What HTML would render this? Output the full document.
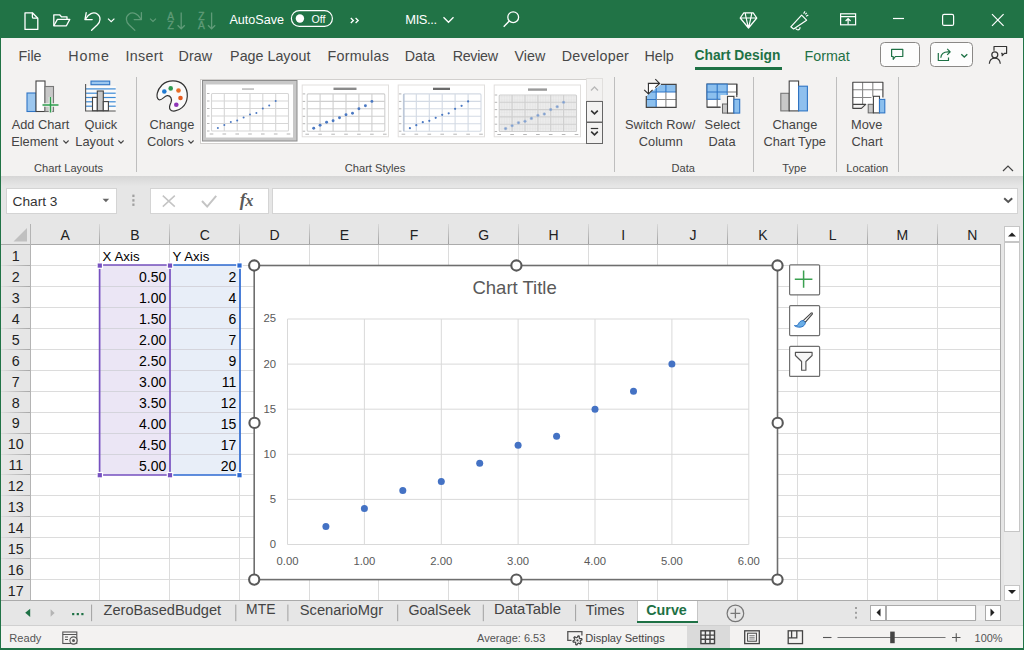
<!DOCTYPE html><html><head><meta charset="utf-8"><style>
html,body{margin:0;padding:0}
body{width:1024px;height:650px;overflow:hidden;position:relative;background:#e6e6e6;font-family:"Liberation Sans",sans-serif}
.t{position:absolute;white-space:nowrap}
.r{position:absolute;box-sizing:border-box}
svg.r{overflow:visible}
</style></head><body>
<div class="r" style="left:0px;top:0px;width:1024px;height:38px;background:#217346"></div>
<svg class="r" style="left:0px;top:0px;" width="1024" height="38" viewBox="0 0 1024 38"><path d="M25 12.8h7.4l5.4 5.4v11.2h-12.8z" fill="none" stroke="#fff" stroke-width="1.3" stroke-linejoin="round"/><path d="M32.4 12.8v4.2q0 1.2 1.2 1.2h4.2" fill="none" stroke="#fff" stroke-width="1.3"/><path d="M53.8 25.8v-11h5.8l1.8 2h5.6v2.6" fill="none" stroke="#fff" stroke-width="1.3" stroke-linejoin="round"/><path d="M53.8 25.8l3.6-6.4h12.4l-3.4 6.4z" fill="none" stroke="#fff" stroke-width="1.3" stroke-linejoin="round"/><path d="M86.2 12.6l-1.2 7h7.2" fill="none" stroke="#fff" stroke-width="1.3" stroke-linejoin="round" stroke-linecap="round"/><path d="M85.4 19.2c2.6-5.4 8.2-8 12.2-5c3.6 2.8 2.8 7.6-0.2 10.6l-5.8 5.4" fill="none" stroke="#fff" stroke-width="1.3" stroke-linecap="round"/><path d="M108 18.6l3.2 3l3.2-3" fill="none" stroke="#fff" stroke-width="1.2"/><path d="M141.4 12.6v7h-7.2" fill="none" stroke="#5f9b78" stroke-width="1.3" stroke-linejoin="round" stroke-linecap="round"/><path d="M141 19.2c-2.6-5.4-8.2-8-12.2-5c-3.6 2.8-2.8 7.6 0.2 10.6l5.8 5.4" fill="none" stroke="#5f9b78" stroke-width="1.3" stroke-linecap="round"/><path d="M150 18.6l3 2.8l3-2.8" fill="none" stroke="#5f9b78" stroke-width="1.2"/><text x="167.3" y="19.8" font-size="10.2" fill="#5f9b78" stroke="#5f9b78" stroke-width="0.35" font-family="Liberation Sans">A</text><text x="167.6" y="29.4" font-size="10.2" fill="#5f9b78" stroke="#5f9b78" stroke-width="0.35" font-family="Liberation Sans">Z</text><path d="M181.2 12.5v16.3 M177.6 25.2l3.6 3.6l3.6-3.6" fill="none" stroke="#5f9b78" stroke-width="1.3"/><text x="198.2" y="19.8" font-size="10.2" fill="#5f9b78" stroke="#5f9b78" stroke-width="0.35" font-family="Liberation Sans">Z</text><text x="197.9" y="29.4" font-size="10.2" fill="#5f9b78" stroke="#5f9b78" stroke-width="0.35" font-family="Liberation Sans">A</text><path d="M211.6 12.5v16.3 M208 25.2l3.6 3.6l3.6-3.6" fill="none" stroke="#5f9b78" stroke-width="1.3"/><rect x="291.4" y="10.6" width="41" height="15.8" rx="7.9" fill="none" stroke="#fff" stroke-width="1.2"/><circle cx="299.9" cy="18.5" r="4.2" fill="#fff"/><path d="M350.8 18l2.6 2.5l-2.6 2.5 M355.6 18l2.6 2.5l-2.6 2.5" fill="none" stroke="#fff" stroke-width="1.3"/><path d="M443.5 17.3l5 5l5-5" fill="none" stroke="#fff" stroke-width="1.3"/><circle cx="513.2" cy="17.2" r="5.4" fill="none" stroke="#fff" stroke-width="1.3"/><path d="M509.3 21.1l-5.6 5.6" stroke="#fff" stroke-width="1.4"/><path d="M743.8 12.8h9.4l3.6 5.2l-8.3 10l-8.3-10z M740.2 18h16.6 M745.2 12.8q0.4 3.4 3.3 15.2 M751.8 12.8q-0.4 3.4-3.3 15.2" fill="none" stroke="#fff" stroke-width="1.2" stroke-linejoin="round"/><path d="M790.8 26.8l10.8-11.6l5 5l-13 8.8z" fill="none" stroke="#fff" stroke-width="1.2" stroke-linejoin="round"/><path d="M795.8 28.4c0.4 1.6 2.8 1.9 3.9 0.4l0.5-1.6" fill="none" stroke="#fff" stroke-width="1.2"/><path d="M803.6 13.6l1.4-2.2 M806 16.2l2.3-1.2 M805.2 14.4l1.6-1.6" stroke="#fff" stroke-width="1.1"/><rect x="840.6" y="13.8" width="15" height="11" fill="none" stroke="#fff" stroke-width="1.2"/><path d="M840.6 16.6h15 M848.1 24.5v-6 M845.6 21l2.5-2.5l2.5 2.5" fill="none" stroke="#fff" stroke-width="1.2"/><path d="M893 18.5h11" stroke="#fff" stroke-width="1.2"/><rect x="942.6" y="14.4" width="11" height="11" rx="1.5" fill="none" stroke="#fff" stroke-width="1.2"/><path d="M992 14.2l11.6 11.6 M1003.6 14.2l-11.6 11.6" stroke="#fff" stroke-width="1.2"/></svg>
<div class="t" style="left:229.4px;top:13.73px;font-size:12.6px;line-height:12.6px;color:#fff;font-weight:normal;">AutoSave</div>
<div class="t" style="left:311.6px;top:13.73px;font-size:10.6px;line-height:10.6px;color:#fff;font-weight:normal;">Off</div>
<div class="t" style="left:405.3px;top:14.38px;font-size:12.9px;line-height:12.9px;color:#fff;font-weight:normal;letter-spacing:-0.4px;">MIS...</div>
<div class="r" style="left:0px;top:0px;width:1px;height:650px;background:#217346"></div>
<div class="r" style="left:1023px;top:38px;width:1px;height:612px;background:#217346"></div>
<div class="r" style="left:0px;top:648px;width:1024px;height:2px;background:#217346"></div>
<div class="r" style="left:1px;top:38px;width:1022px;height:138px;background:#f3f2f1"></div>
<div class="r" style="left:1px;top:176px;width:1022px;height:10px;background:linear-gradient(#d6d6d6,#e6e6e6)"></div>
<div class="t" style="left:18.5px;top:48.90px;font-size:14.3px;line-height:14.3px;color:#484848;font-weight:normal;letter-spacing:0px;">File</div>
<div class="t" style="left:68.3px;top:48.90px;font-size:14.3px;line-height:14.3px;color:#484848;font-weight:normal;letter-spacing:0.85px;">Home</div>
<div class="t" style="left:125.4px;top:48.90px;font-size:14.3px;line-height:14.3px;color:#484848;font-weight:normal;letter-spacing:0.36px;">Insert</div>
<div class="t" style="left:178.6px;top:48.90px;font-size:14.3px;line-height:14.3px;color:#484848;font-weight:normal;letter-spacing:0px;">Draw</div>
<div class="t" style="left:230.1px;top:48.90px;font-size:14.3px;line-height:14.3px;color:#484848;font-weight:normal;letter-spacing:0px;">Page Layout</div>
<div class="t" style="left:327.4px;top:48.90px;font-size:14.3px;line-height:14.3px;color:#484848;font-weight:normal;letter-spacing:0.28px;">Formulas</div>
<div class="t" style="left:404.8px;top:48.90px;font-size:14.3px;line-height:14.3px;color:#484848;font-weight:normal;letter-spacing:0px;">Data</div>
<div class="t" style="left:452.7px;top:48.90px;font-size:14.3px;line-height:14.3px;color:#484848;font-weight:normal;letter-spacing:-0.3px;">Review</div>
<div class="t" style="left:514.5px;top:48.90px;font-size:14.3px;line-height:14.3px;color:#484848;font-weight:normal;letter-spacing:0px;">View</div>
<div class="t" style="left:561.7px;top:48.90px;font-size:14.3px;line-height:14.3px;color:#484848;font-weight:normal;letter-spacing:0.25px;">Developer</div>
<div class="t" style="left:644.4px;top:48.90px;font-size:14.3px;line-height:14.3px;color:#484848;font-weight:normal;letter-spacing:0px;">Help</div>
<div class="t" style="left:694.5px;top:49.32px;font-size:13.8px;line-height:13.8px;color:#1e7145;font-weight:bold;">Chart Design</div>
<div class="t" style="left:804.5px;top:48.90px;font-size:14.3px;line-height:14.3px;color:#1e7145;font-weight:normal;">Format</div>
<div class="r" style="left:695px;top:67px;width:87px;height:3px;background:#1e7145"></div>
<div class="r" style="left:879.5px;top:42.3px;width:40px;height:25px;border:1px solid #8a8886;border-radius:4.5px;background:#fdfdfd"></div>
<div class="r" style="left:929.5px;top:42.3px;width:43px;height:25px;border:1px solid #8a8886;border-radius:4.5px;background:#fdfdfd"></div>
<svg class="r" style="left:0px;top:0px;" width="1024" height="80" viewBox="0 0 1024 80"><path d="M891.6 49.3h11.2v7.2h-7.4l-2.2 2.8v-2.8h-1.6z" fill="none" stroke="#1e7145" stroke-width="1.2" stroke-linejoin="round"/><path d="M938.3 53v7.5h10.2v-3" fill="none" stroke="#1e7145" stroke-width="1.2" stroke-linejoin="round"/><path d="M940.8 57.8c0.3-3.6 3-6 7.2-6h1.6 M947.2 48.8l3 3l-3 3" fill="none" stroke="#1e7145" stroke-width="1.2" stroke-linejoin="round"/><path d="M961.3 54.2l3 2.8l3-2.8" fill="none" stroke="#1e7145" stroke-width="1.3"/><circle cx="994.8" cy="54.8" r="3" fill="none" stroke="#333" stroke-width="1.2"/><path d="M989.3 63.8c0.4-3.6 2.6-5.6 5.5-5.6c2.9 0 5.1 2 5.5 5.6" fill="none" stroke="#333" stroke-width="1.2"/><path d="M994 50.8v-4.3h12.6v6.8h-2.2l-2.2 2.4v-2.4h-1" fill="none" stroke="#333" stroke-width="1.2" stroke-linejoin="round"/></svg>
<div class="r" style="left:136px;top:77px;width:1px;height:95px;background:#bebebe"></div>
<div class="r" style="left:614px;top:77px;width:1px;height:95px;background:#bebebe"></div>
<div class="r" style="left:753px;top:77px;width:1px;height:95px;background:#bebebe"></div>
<div class="r" style="left:836px;top:77px;width:1px;height:95px;background:#bebebe"></div>
<div class="r" style="left:898px;top:77px;width:1px;height:95px;background:#bebebe"></div>
<div class="t" style="left:11.7px;top:118.56px;font-size:12.8px;line-height:12.8px;color:#444;font-weight:normal;">Add Chart</div>
<div class="t" style="left:11.2px;top:136.16px;font-size:12.8px;line-height:12.8px;color:#444;font-weight:normal;">Element</div>
<div class="t" style="left:84.5px;top:118.56px;font-size:12.8px;line-height:12.8px;color:#444;font-weight:normal;">Quick</div>
<div class="t" style="left:75.3px;top:136.16px;font-size:12.8px;line-height:12.8px;color:#444;font-weight:normal;">Layout</div>
<div class="t" style="left:149.5px;top:118.56px;font-size:12.8px;line-height:12.8px;color:#444;font-weight:normal;">Change</div>
<div class="t" style="left:147.0px;top:136.16px;font-size:12.8px;line-height:12.8px;color:#444;font-weight:normal;">Colors</div>
<div class="t" style="left:625.0px;top:118.56px;font-size:12.8px;line-height:12.8px;color:#444;font-weight:normal;">Switch Row/</div>
<div class="t" style="left:638.8px;top:136.16px;font-size:12.8px;line-height:12.8px;color:#444;font-weight:normal;">Column</div>
<div class="t" style="left:704.6px;top:118.56px;font-size:12.8px;line-height:12.8px;color:#444;font-weight:normal;">Select</div>
<div class="t" style="left:708.5px;top:136.16px;font-size:12.8px;line-height:12.8px;color:#444;font-weight:normal;">Data</div>
<div class="t" style="left:772.5px;top:118.56px;font-size:12.8px;line-height:12.8px;color:#444;font-weight:normal;">Change</div>
<div class="t" style="left:763.5px;top:136.16px;font-size:12.8px;line-height:12.8px;color:#444;font-weight:normal;">Chart Type</div>
<div class="t" style="left:851.0px;top:118.56px;font-size:12.8px;line-height:12.8px;color:#444;font-weight:normal;">Move</div>
<div class="t" style="left:851.5px;top:136.16px;font-size:12.8px;line-height:12.8px;color:#444;font-weight:normal;">Chart</div>
<div class="t" style="left:-131.4px;width:400px;text-align:center;top:162.60px;font-size:11.1px;line-height:11.1px;color:#444;font-weight:normal;">Chart Layouts</div>
<div class="t" style="left:175.0px;width:400px;text-align:center;top:162.60px;font-size:11.1px;line-height:11.1px;color:#444;font-weight:normal;">Chart Styles</div>
<div class="t" style="left:483.2px;width:400px;text-align:center;top:162.60px;font-size:11.1px;line-height:11.1px;color:#444;font-weight:normal;">Data</div>
<div class="t" style="left:594.4px;width:400px;text-align:center;top:162.60px;font-size:11.1px;line-height:11.1px;color:#444;font-weight:normal;">Type</div>
<div class="t" style="left:667.3px;width:400px;text-align:center;top:162.60px;font-size:11.1px;line-height:11.1px;color:#444;font-weight:normal;">Location</div>
<svg class="r" style="left:0px;top:0px;" width="1024" height="180" viewBox="0 0 1024 180"><path d="M63.4 140.5l2.6 2.6l2.6-2.6" fill="none" stroke="#444" stroke-width="1.1"/><path d="M118.4 140.5l2.6 2.6l2.6-2.6" fill="none" stroke="#444" stroke-width="1.1"/><path d="M188.4 140.5l2.6 2.6l2.6-2.6" fill="none" stroke="#444" stroke-width="1.1"/><path d="M1003 171l5-5l5 5" fill="none" stroke="#444" stroke-width="1.2"/><rect x="27" y="93" width="9" height="18.5" fill="#9cc7ef" stroke="#2f75c5" stroke-width="1.1"/><rect x="36" y="81" width="9" height="30.5" fill="#fff" stroke="#444" stroke-width="1.1"/><rect x="45" y="86.5" width="8.5" height="25" fill="#c8c8c8" stroke="#777" stroke-width="1.1"/><path d="M50.5 97v15.5 M42.5 105h16" stroke="#f3f2f1" stroke-width="3.5"/><path d="M50.5 97v15.5 M42.5 105h16" stroke="#2e9e4e" stroke-width="1.5"/><rect x="86" y="86" width="30" height="25" fill="#fbfaf9"/><rect x="91" y="81.1" width="18.7" height="3.6" fill="#9cc7ef" stroke="#2f75c5" stroke-width="1.1"/><path d="M86 88.9h29.7" stroke="#3d8bd6" stroke-width="1.2"/><path d="M86 93.2h29.7" stroke="#3d8bd6" stroke-width="1.2"/><path d="M86 97.5h29.7" stroke="#3d8bd6" stroke-width="1.2"/><path d="M86 101.8h29.7" stroke="#3d8bd6" stroke-width="1.2"/><path d="M86 106.2h29.7" stroke="#3d8bd6" stroke-width="1.2"/><path d="M85.6 84v27h30.1" fill="none" stroke="#555" stroke-width="1.1"/><rect x="92.5" y="97.4" width="4.8" height="13.3" fill="#fff" stroke="#444" stroke-width="1.1"/><rect x="97.3" y="91" width="6" height="19.7" fill="#c8c8c8" stroke="#444" stroke-width="1.1"/><rect x="103.3" y="101.6" width="5.1" height="9.1" fill="#fff" stroke="#444" stroke-width="1.1"/><path d="M158.6 99.6C155.6 97 157 90 162 85C168 79.6 178 79.6 183.6 85C189 91 188.6 102 182 107.6C177.6 111.5 172 112 170.2 109.6C168.6 107.5 170 104.5 171 102.5C172.5 99 170.5 95.3 167.2 95.6C164 96 161.5 101.5 158.6 99.6Z" fill="#fafafa" stroke="#333" stroke-width="1.2"/><circle cx="164.3" cy="91.5" r="2.3" fill="#1f7ad1"/><circle cx="170.7" cy="88.4" r="2.3" fill="#2e9a50"/><circle cx="178.5" cy="90.5" r="2.3" fill="#e76f28"/><circle cx="180.5" cy="98" r="2.3" fill="#e55a1f"/><circle cx="176.3" cy="104.7" r="2.3" fill="#8e35b8"/><rect x="646.3" y="84.4" width="29.8" height="23" fill="#fff"/><path d="M646.3 95.9L660.9 84.4H676.1V92H656.2V107.4H646.3Z" fill="#8cc0ee"/><path d="M651.25 92H676.1 M656.2 88.1V107.4 M646.3 99.5H656.2 M665.9 84.4V92" stroke="#2f75c5" stroke-width="1.1"/><path d="M656.2 99.5H676.1 M665.9 92V107.4" stroke="#888" stroke-width="1.1"/><path d="M660.9 84.4H676.1V107.4H646.3V95.9" fill="none" stroke="#444" stroke-width="1.2"/><path d="M648.4 94V83.4H659.6 M655.3 79.1L659.6 83.4L655.3 87.7 M644.2 89.8L648.4 94L652.6 89.8" fill="none" stroke="#333" stroke-width="1.15"/><rect x="707" y="84.1" width="29.8" height="23.1" fill="#fff" stroke="#444" stroke-width="1.1"/><rect x="707" y="84.1" width="20.2" height="15.2" fill="#8cc0ee" stroke="#2f75c5" stroke-width="1.1"/><path d="M707 92H727.2 M717.2 84.1V99.3" stroke="#2f75c5" stroke-width="1.1"/><path d="M727.2 92H736.8 M717.2 99.3V107.2" stroke="#777" stroke-width="1.1"/><rect x="720.5" y="95" width="20.5" height="19" fill="#f3f2f1"/><path d="M707 107.2H720.5 M736.8 84.1V97" fill="none" stroke="#444" stroke-width="1.1"/><rect x="722.5" y="104" width="5" height="9.1" fill="#c8c8c8" stroke="#666" stroke-width="1"/><rect x="727.5" y="96.4" width="6.4" height="16.7" fill="#fff" stroke="#444" stroke-width="1.1"/><rect x="733.9" y="99.3" width="5.8" height="13.8" fill="#8cc0ee" stroke="#2f75c5" stroke-width="1.1"/><rect x="780.8" y="93.3" width="8.4" height="17.6" fill="#c8c8c8" stroke="#777" stroke-width="1.1"/><rect x="789.2" y="81" width="9.4" height="29.9" fill="#fff" stroke="#444" stroke-width="1.1"/><rect x="798.6" y="86.2" width="8.8" height="24.7" fill="#8fc0ee" stroke="#2f75c5" stroke-width="1.1"/><rect x="852.8" y="82.2" width="30.1" height="22.1" fill="#fff"/><path d="M852.8 89.8H882.9 M852.8 97.5H871.5 M862.6 82.2V104.3 M872.8 82.2V96.5" stroke="#888" stroke-width="1.1"/><path d="M882.9 97.5V82.2H852.8V108.3H861.4L865.7 104.3H852.8" fill="none" stroke="#444" stroke-width="1.15" stroke-linejoin="round"/><rect x="868.2" y="104.3" width="5.2" height="8.6" fill="#c8c8c8" stroke="#666" stroke-width="1"/><rect x="873.4" y="96.3" width="6.1" height="16.6" fill="#fff" stroke="#444" stroke-width="1.1"/><rect x="879.5" y="99.4" width="5.3" height="13.5" fill="#8cc0ee" stroke="#2f75c5" stroke-width="1.1"/></svg>
<div class="r" style="left:200px;top:78.5px;width:387px;height:65px;background:#fff;border:1px solid #d2d0ce"></div>
<svg class="r" style="left:0px;top:0px;" width="1024" height="180" viewBox="0 0 1024 180"><rect x="202.5" y="80.5" width="94.5" height="60.5" fill="#c8c8c8" stroke="#8c8c8c" stroke-width="1"/><rect x="206" y="84.5" width="87" height="53" fill="#fff"/><rect x="211.5" y="93.5" width="77.0" height="37.5" rx="1" fill="none" stroke="#d6d6d6" stroke-width="1.1"/><path d="M211.5 101.0H288.5" stroke="#d6d6d6" stroke-width="1.1"/><path d="M211.5 108.5H288.5" stroke="#d6d6d6" stroke-width="1.1"/><path d="M211.5 116.0H288.5" stroke="#d6d6d6" stroke-width="1.1"/><path d="M211.5 123.5H288.5" stroke="#d6d6d6" stroke-width="1.1"/><path d="M224.3 93.5V131" stroke="#d6d6d6" stroke-width="1.1"/><path d="M237.2 93.5V131" stroke="#d6d6d6" stroke-width="1.1"/><path d="M250.0 93.5V131" stroke="#d6d6d6" stroke-width="1.1"/><path d="M262.8 93.5V131" stroke="#d6d6d6" stroke-width="1.1"/><path d="M275.7 93.5V131" stroke="#d6d6d6" stroke-width="1.1"/><rect x="207.0" y="130.5" width="2.5" height="1" fill="#b5b5b5"/><rect x="207.0" y="123.0" width="2.5" height="1" fill="#b5b5b5"/><rect x="207.0" y="115.5" width="2.5" height="1" fill="#b5b5b5"/><rect x="207.0" y="108.0" width="2.5" height="1" fill="#b5b5b5"/><rect x="207.0" y="100.5" width="2.5" height="1" fill="#b5b5b5"/><rect x="207.0" y="93.0" width="2.5" height="1" fill="#b5b5b5"/><rect x="209.7" y="133.5" width="3.6" height="1" fill="#b5b5b5"/><rect x="222.5" y="133.5" width="3.6" height="1" fill="#b5b5b5"/><rect x="235.4" y="133.5" width="3.6" height="1" fill="#b5b5b5"/><rect x="248.2" y="133.5" width="3.6" height="1" fill="#b5b5b5"/><rect x="261.0" y="133.5" width="3.6" height="1" fill="#b5b5b5"/><rect x="273.9" y="133.5" width="3.6" height="1" fill="#b5b5b5"/><rect x="286.7" y="133.5" width="3.6" height="1" fill="#b5b5b5"/><rect x="242" y="88.4" width="12" height="1.3" fill="#b0b0b0"/><circle cx="217.9" cy="128.0" r="1.0" fill="#4a78c2"/><circle cx="224.3" cy="125.0" r="1.0" fill="#4a78c2"/><circle cx="230.8" cy="122.0" r="1.0" fill="#4a78c2"/><circle cx="237.2" cy="120.5" r="1.0" fill="#4a78c2"/><circle cx="243.6" cy="117.5" r="1.0" fill="#4a78c2"/><circle cx="250.0" cy="114.5" r="1.0" fill="#4a78c2"/><circle cx="256.4" cy="113.0" r="1.0" fill="#4a78c2"/><circle cx="262.8" cy="108.5" r="1.0" fill="#4a78c2"/><circle cx="269.2" cy="105.5" r="1.0" fill="#4a78c2"/><circle cx="275.7" cy="101.0" r="1.0" fill="#4a78c2"/><rect x="302.2" y="85" width="86.3" height="51.8" fill="#fff" stroke="#e1dfdd" stroke-width="1"/><rect x="307.2" y="93.9" width="77.60000000000002" height="37.29999999999998" rx="1" fill="none" stroke="#cfcfcf" stroke-width="1.1"/><path d="M307.2 101.4H384.8" stroke="#cfcfcf" stroke-width="1.1"/><path d="M307.2 108.8H384.8" stroke="#cfcfcf" stroke-width="1.1"/><path d="M307.2 116.3H384.8" stroke="#cfcfcf" stroke-width="1.1"/><path d="M307.2 123.7H384.8" stroke="#cfcfcf" stroke-width="1.1"/><path d="M320.1 93.9V131.2" stroke="#cfcfcf" stroke-width="1.1"/><path d="M333.1 93.9V131.2" stroke="#cfcfcf" stroke-width="1.1"/><path d="M346.0 93.9V131.2" stroke="#cfcfcf" stroke-width="1.1"/><path d="M358.9 93.9V131.2" stroke="#cfcfcf" stroke-width="1.1"/><path d="M371.9 93.9V131.2" stroke="#cfcfcf" stroke-width="1.1"/><rect x="302.7" y="130.7" width="2.5" height="1" fill="#b5b5b5"/><rect x="302.7" y="123.2" width="2.5" height="1" fill="#b5b5b5"/><rect x="302.7" y="115.8" width="2.5" height="1" fill="#b5b5b5"/><rect x="302.7" y="108.3" width="2.5" height="1" fill="#b5b5b5"/><rect x="302.7" y="100.9" width="2.5" height="1" fill="#b5b5b5"/><rect x="302.7" y="93.4" width="2.5" height="1" fill="#b5b5b5"/><rect x="305.4" y="133.7" width="3.6" height="1" fill="#b5b5b5"/><rect x="318.3" y="133.7" width="3.6" height="1" fill="#b5b5b5"/><rect x="331.3" y="133.7" width="3.6" height="1" fill="#b5b5b5"/><rect x="344.2" y="133.7" width="3.6" height="1" fill="#b5b5b5"/><rect x="357.1" y="133.7" width="3.6" height="1" fill="#b5b5b5"/><rect x="370.1" y="133.7" width="3.6" height="1" fill="#b5b5b5"/><rect x="383.0" y="133.7" width="3.6" height="1" fill="#b5b5b5"/><rect x="333.5" y="87.6" width="23" height="2.4" fill="#8a8a8a"/><circle cx="313.7" cy="128.2" r="1.45" fill="#4a78c2"/><circle cx="320.1" cy="125.2" r="1.45" fill="#4a78c2"/><circle cx="326.6" cy="122.2" r="1.45" fill="#4a78c2"/><circle cx="333.1" cy="120.8" r="1.45" fill="#4a78c2"/><circle cx="339.5" cy="117.8" r="1.45" fill="#4a78c2"/><circle cx="346.0" cy="114.8" r="1.45" fill="#4a78c2"/><circle cx="352.5" cy="113.3" r="1.45" fill="#4a78c2"/><circle cx="358.9" cy="108.8" r="1.45" fill="#4a78c2"/><circle cx="365.4" cy="105.8" r="1.45" fill="#4a78c2"/><circle cx="371.9" cy="101.4" r="1.45" fill="#4a78c2"/><rect x="398.2" y="85" width="86.3" height="51.8" fill="#fff" stroke="#e1dfdd" stroke-width="1"/><rect x="403.4" y="93.9" width="77.60000000000002" height="37.29999999999998" rx="1" fill="none" stroke="#d3dae4" stroke-width="1.1"/><path d="M403.4 101.4H481" stroke="#d3dae4" stroke-width="1.1"/><path d="M403.4 108.8H481" stroke="#d3dae4" stroke-width="1.1"/><path d="M403.4 116.3H481" stroke="#d3dae4" stroke-width="1.1"/><path d="M403.4 123.7H481" stroke="#d3dae4" stroke-width="1.1"/><path d="M416.3 93.9V131.2" stroke="#d3dae4" stroke-width="1.1"/><path d="M429.3 93.9V131.2" stroke="#d3dae4" stroke-width="1.1"/><path d="M442.2 93.9V131.2" stroke="#d3dae4" stroke-width="1.1"/><path d="M455.1 93.9V131.2" stroke="#d3dae4" stroke-width="1.1"/><path d="M468.1 93.9V131.2" stroke="#d3dae4" stroke-width="1.1"/><path d="M403.9 93.9V131.2" stroke="#b8c4d6" stroke-width="1.4"/><rect x="398.9" y="130.7" width="2.5" height="1" fill="#b5b5b5"/><rect x="398.9" y="123.2" width="2.5" height="1" fill="#b5b5b5"/><rect x="398.9" y="115.8" width="2.5" height="1" fill="#b5b5b5"/><rect x="398.9" y="108.3" width="2.5" height="1" fill="#b5b5b5"/><rect x="398.9" y="100.9" width="2.5" height="1" fill="#b5b5b5"/><rect x="398.9" y="93.4" width="2.5" height="1" fill="#b5b5b5"/><rect x="401.6" y="133.7" width="3.6" height="1" fill="#b5b5b5"/><rect x="414.5" y="133.7" width="3.6" height="1" fill="#b5b5b5"/><rect x="427.5" y="133.7" width="3.6" height="1" fill="#b5b5b5"/><rect x="440.4" y="133.7" width="3.6" height="1" fill="#b5b5b5"/><rect x="453.3" y="133.7" width="3.6" height="1" fill="#b5b5b5"/><rect x="466.3" y="133.7" width="3.6" height="1" fill="#b5b5b5"/><rect x="479.2" y="133.7" width="3.6" height="1" fill="#b5b5b5"/><rect x="433.0" y="87.7" width="17" height="2.3" fill="#6a6a6a"/><circle cx="409.9" cy="128.2" r="1.1" fill="#4a78c2"/><circle cx="416.3" cy="125.2" r="1.1" fill="#4a78c2"/><circle cx="422.8" cy="122.2" r="1.1" fill="#4a78c2"/><circle cx="429.3" cy="120.8" r="1.1" fill="#4a78c2"/><circle cx="435.7" cy="117.8" r="1.1" fill="#4a78c2"/><circle cx="442.2" cy="114.8" r="1.1" fill="#4a78c2"/><circle cx="448.7" cy="113.3" r="1.1" fill="#4a78c2"/><circle cx="455.1" cy="108.8" r="1.1" fill="#4a78c2"/><circle cx="461.6" cy="105.8" r="1.1" fill="#4a78c2"/><circle cx="468.1" cy="101.4" r="1.1" fill="#4a78c2"/><rect x="494.2" y="85" width="86.3" height="51.8" fill="#fff" stroke="#e1dfdd" stroke-width="1"/><rect x="499.2" y="95" width="77.30000000000001" height="36.5" fill="#f1f1f1"/><path d="M501.8 95V131.5" stroke="#e0e0e0" stroke-width="0.5"/><path d="M504.4 95V131.5" stroke="#e0e0e0" stroke-width="0.5"/><path d="M506.9 95V131.5" stroke="#e0e0e0" stroke-width="0.5"/><path d="M509.5 95V131.5" stroke="#e0e0e0" stroke-width="0.5"/><path d="M512.1 95V131.5" stroke="#e0e0e0" stroke-width="0.5"/><path d="M514.7 95V131.5" stroke="#e0e0e0" stroke-width="0.5"/><path d="M517.2 95V131.5" stroke="#e0e0e0" stroke-width="0.5"/><path d="M519.8 95V131.5" stroke="#e0e0e0" stroke-width="0.5"/><path d="M522.4 95V131.5" stroke="#e0e0e0" stroke-width="0.5"/><path d="M525.0 95V131.5" stroke="#e0e0e0" stroke-width="0.5"/><path d="M527.5 95V131.5" stroke="#e0e0e0" stroke-width="0.5"/><path d="M530.1 95V131.5" stroke="#e0e0e0" stroke-width="0.5"/><path d="M532.7 95V131.5" stroke="#e0e0e0" stroke-width="0.5"/><path d="M535.3 95V131.5" stroke="#e0e0e0" stroke-width="0.5"/><path d="M537.9 95V131.5" stroke="#e0e0e0" stroke-width="0.5"/><path d="M540.4 95V131.5" stroke="#e0e0e0" stroke-width="0.5"/><path d="M543.0 95V131.5" stroke="#e0e0e0" stroke-width="0.5"/><path d="M545.6 95V131.5" stroke="#e0e0e0" stroke-width="0.5"/><path d="M548.2 95V131.5" stroke="#e0e0e0" stroke-width="0.5"/><path d="M550.7 95V131.5" stroke="#e0e0e0" stroke-width="0.5"/><path d="M553.3 95V131.5" stroke="#e0e0e0" stroke-width="0.5"/><path d="M555.9 95V131.5" stroke="#e0e0e0" stroke-width="0.5"/><path d="M558.5 95V131.5" stroke="#e0e0e0" stroke-width="0.5"/><path d="M561.0 95V131.5" stroke="#e0e0e0" stroke-width="0.5"/><path d="M563.6 95V131.5" stroke="#e0e0e0" stroke-width="0.5"/><path d="M566.2 95V131.5" stroke="#e0e0e0" stroke-width="0.5"/><path d="M568.8 95V131.5" stroke="#e0e0e0" stroke-width="0.5"/><path d="M571.3 95V131.5" stroke="#e0e0e0" stroke-width="0.5"/><path d="M573.9 95V131.5" stroke="#e0e0e0" stroke-width="0.5"/><path d="M499.2 96.5H576.5" stroke="#e0e0e0" stroke-width="0.5"/><path d="M499.2 97.9H576.5" stroke="#e0e0e0" stroke-width="0.5"/><path d="M499.2 99.4H576.5" stroke="#e0e0e0" stroke-width="0.5"/><path d="M499.2 100.8H576.5" stroke="#e0e0e0" stroke-width="0.5"/><path d="M499.2 102.3H576.5" stroke="#e0e0e0" stroke-width="0.5"/><path d="M499.2 103.8H576.5" stroke="#e0e0e0" stroke-width="0.5"/><path d="M499.2 105.2H576.5" stroke="#e0e0e0" stroke-width="0.5"/><path d="M499.2 106.7H576.5" stroke="#e0e0e0" stroke-width="0.5"/><path d="M499.2 108.1H576.5" stroke="#e0e0e0" stroke-width="0.5"/><path d="M499.2 109.6H576.5" stroke="#e0e0e0" stroke-width="0.5"/><path d="M499.2 111.1H576.5" stroke="#e0e0e0" stroke-width="0.5"/><path d="M499.2 112.5H576.5" stroke="#e0e0e0" stroke-width="0.5"/><path d="M499.2 114.0H576.5" stroke="#e0e0e0" stroke-width="0.5"/><path d="M499.2 115.4H576.5" stroke="#e0e0e0" stroke-width="0.5"/><path d="M499.2 116.9H576.5" stroke="#e0e0e0" stroke-width="0.5"/><path d="M499.2 118.4H576.5" stroke="#e0e0e0" stroke-width="0.5"/><path d="M499.2 119.8H576.5" stroke="#e0e0e0" stroke-width="0.5"/><path d="M499.2 121.3H576.5" stroke="#e0e0e0" stroke-width="0.5"/><path d="M499.2 122.7H576.5" stroke="#e0e0e0" stroke-width="0.5"/><path d="M499.2 124.2H576.5" stroke="#e0e0e0" stroke-width="0.5"/><path d="M499.2 125.7H576.5" stroke="#e0e0e0" stroke-width="0.5"/><path d="M499.2 127.1H576.5" stroke="#e0e0e0" stroke-width="0.5"/><path d="M499.2 128.6H576.5" stroke="#e0e0e0" stroke-width="0.5"/><path d="M499.2 130.0H576.5" stroke="#e0e0e0" stroke-width="0.5"/><rect x="499.2" y="95" width="77.30000000000001" height="36.5" rx="1" fill="none" stroke="#cfcfcf" stroke-width="1.1"/><path d="M499.2 102.3H576.5" stroke="#cfcfcf" stroke-width="1.1"/><path d="M499.2 109.6H576.5" stroke="#cfcfcf" stroke-width="1.1"/><path d="M499.2 116.9H576.5" stroke="#cfcfcf" stroke-width="1.1"/><path d="M499.2 124.2H576.5" stroke="#cfcfcf" stroke-width="1.1"/><path d="M512.1 95V131.5" stroke="#cfcfcf" stroke-width="1.1"/><path d="M525.0 95V131.5" stroke="#cfcfcf" stroke-width="1.1"/><path d="M537.9 95V131.5" stroke="#cfcfcf" stroke-width="1.1"/><path d="M550.7 95V131.5" stroke="#cfcfcf" stroke-width="1.1"/><path d="M563.6 95V131.5" stroke="#cfcfcf" stroke-width="1.1"/><rect x="494.7" y="131.0" width="2.5" height="1" fill="#b5b5b5"/><rect x="494.7" y="123.7" width="2.5" height="1" fill="#b5b5b5"/><rect x="494.7" y="116.4" width="2.5" height="1" fill="#b5b5b5"/><rect x="494.7" y="109.1" width="2.5" height="1" fill="#b5b5b5"/><rect x="494.7" y="101.8" width="2.5" height="1" fill="#b5b5b5"/><rect x="494.7" y="94.5" width="2.5" height="1" fill="#b5b5b5"/><rect x="497.4" y="134.0" width="3.6" height="1" fill="#b5b5b5"/><rect x="510.3" y="134.0" width="3.6" height="1" fill="#b5b5b5"/><rect x="523.2" y="134.0" width="3.6" height="1" fill="#b5b5b5"/><rect x="536.1" y="134.0" width="3.6" height="1" fill="#b5b5b5"/><rect x="548.9" y="134.0" width="3.6" height="1" fill="#b5b5b5"/><rect x="561.8" y="134.0" width="3.6" height="1" fill="#b5b5b5"/><rect x="574.7" y="134.0" width="3.6" height="1" fill="#b5b5b5"/><rect x="528.0" y="88.4" width="19" height="2.4" fill="#9a9a9a"/><circle cx="505.6" cy="128.6" r="1.3" fill="#7d9fd3" stroke="#a8b8d0" stroke-width="0.6"/><circle cx="512.1" cy="125.7" r="1.3" fill="#7d9fd3" stroke="#a8b8d0" stroke-width="0.6"/><circle cx="518.5" cy="122.7" r="1.3" fill="#7d9fd3" stroke="#a8b8d0" stroke-width="0.6"/><circle cx="525.0" cy="121.3" r="1.3" fill="#7d9fd3" stroke="#a8b8d0" stroke-width="0.6"/><circle cx="531.4" cy="118.4" r="1.3" fill="#7d9fd3" stroke="#a8b8d0" stroke-width="0.6"/><circle cx="537.9" cy="115.4" r="1.3" fill="#7d9fd3" stroke="#a8b8d0" stroke-width="0.6"/><circle cx="544.3" cy="114.0" r="1.3" fill="#7d9fd3" stroke="#a8b8d0" stroke-width="0.6"/><circle cx="550.7" cy="109.6" r="1.3" fill="#7d9fd3" stroke="#a8b8d0" stroke-width="0.6"/><circle cx="557.2" cy="106.7" r="1.3" fill="#7d9fd3" stroke="#a8b8d0" stroke-width="0.6"/><circle cx="563.6" cy="102.3" r="1.3" fill="#7d9fd3" stroke="#a8b8d0" stroke-width="0.6"/><rect x="586.5" y="78.5" width="16" height="22.3" fill="#f3f2f1" stroke="#e1dfdd" stroke-width="1"/><path d="M591 90.5l3.5-3.5l3.5 3.5" fill="none" stroke="#b8b8b8" stroke-width="1.3"/><rect x="586.5" y="101.5" width="16" height="20.5" fill="#f3f2f1" stroke="#666" stroke-width="1"/><path d="M591.2 110.6l3.3 3.3l3.3-3.3" fill="none" stroke="#333" stroke-width="1.6"/><rect x="586.5" y="122.5" width="16" height="21" fill="#f3f2f1" stroke="#666" stroke-width="1"/><path d="M590.8 128.5h7.4" fill="none" stroke="#333" stroke-width="1.2"/><path d="M591.2 131.6l3.3 3.3l3.3-3.3" fill="none" stroke="#333" stroke-width="1.6"/></svg>
<div class="r" style="left:6px;top:188px;width:111px;height:25.5px;background:#fff;border:1px solid #d4d4d4"></div>
<div class="r" style="left:150px;top:188px;width:118.5px;height:25.5px;background:#fff;border:1px solid #d4d4d4"></div>
<div class="r" style="left:271.5px;top:188px;width:746.5px;height:25.5px;background:#fff;border:1px solid #d4d4d4"></div>
<div class="t" style="left:12.6px;top:194.90px;font-size:13.7px;line-height:13.7px;color:#333;font-weight:normal;">Chart 3</div>
<svg class="r" style="left:0px;top:0px;" width="1024" height="230" viewBox="0 0 1024 230"><path d="M102.6 198.8h6.6l-3.3 3.5z" fill="#666"/><rect x="132.3" y="194.6" width="2.2" height="2.4" fill="#a0a0a0"/><rect x="132.3" y="199.2" width="2.2" height="2.4" fill="#a0a0a0"/><rect x="132.3" y="203.5" width="2.2" height="2.4" fill="#a0a0a0"/><path d="M162.8 195.6l12 11 M174.8 195.6l-12 11" stroke="#c4c4c4" stroke-width="1.5"/><path d="M202 201l5.2 5.6l9-10.8" fill="none" stroke="#c4c4c4" stroke-width="2"/><path d="M1004.2 198.3l4 3.6l4-3.6" fill="none" stroke="#555" stroke-width="2"/></svg>
<div class="t" style="left:239.8px;top:190.56px;font-size:18px;line-height:18px;color:#5a5a5a;font-weight:bold;font-family:Liberation Serif,serif;letter-spacing:-0.6px;"><i>f</i><span style="font-size:16.5px"><i>x</i></span></div>
<div class="r" style="left:30px;top:245px;width:971px;height:355px;background:#fff"></div>
<svg class="r" style="left:0px;top:0px;" width="1024" height="650" viewBox="0 0 1024 650"><defs><linearGradient id="hg" gradientUnits="userSpaceOnUse" x1="0" y1="224" x2="0" y2="244"><stop offset="0" stop-color="#d8d8d8"/><stop offset="1" stop-color="#a0a0a0"/></linearGradient><linearGradient id="rg" gradientUnits="userSpaceOnUse" x1="1" y1="0" x2="30" y2="0"><stop offset="0" stop-color="#dedede"/><stop offset="1" stop-color="#a8a8a8"/></linearGradient></defs><path d="M30 265.5H1001" stroke="#dcdcdc" stroke-width="1"/><path d="M30 286.5H1001" stroke="#dcdcdc" stroke-width="1"/><path d="M30 307.5H1001" stroke="#dcdcdc" stroke-width="1"/><path d="M30 328.5H1001" stroke="#dcdcdc" stroke-width="1"/><path d="M30 349.5H1001" stroke="#dcdcdc" stroke-width="1"/><path d="M30 370.5H1001" stroke="#dcdcdc" stroke-width="1"/><path d="M30 391.5H1001" stroke="#dcdcdc" stroke-width="1"/><path d="M30 412.5H1001" stroke="#dcdcdc" stroke-width="1"/><path d="M30 433.5H1001" stroke="#dcdcdc" stroke-width="1"/><path d="M30 454.5H1001" stroke="#dcdcdc" stroke-width="1"/><path d="M30 474.5H1001" stroke="#dcdcdc" stroke-width="1"/><path d="M30 495.5H1001" stroke="#dcdcdc" stroke-width="1"/><path d="M30 516.5H1001" stroke="#dcdcdc" stroke-width="1"/><path d="M30 537.5H1001" stroke="#dcdcdc" stroke-width="1"/><path d="M30 558.5H1001" stroke="#dcdcdc" stroke-width="1"/><path d="M30 579.5H1001" stroke="#dcdcdc" stroke-width="1"/><path d="M30 600.5H1001" stroke="#dcdcdc" stroke-width="1"/><path d="M99.5 245V600" stroke="#dcdcdc" stroke-width="1"/><path d="M169.5 245V600" stroke="#dcdcdc" stroke-width="1"/><path d="M239.5 245V600" stroke="#dcdcdc" stroke-width="1"/><path d="M309.5 245V600" stroke="#dcdcdc" stroke-width="1"/><path d="M378.5 245V600" stroke="#dcdcdc" stroke-width="1"/><path d="M448.5 245V600" stroke="#dcdcdc" stroke-width="1"/><path d="M518.5 245V600" stroke="#dcdcdc" stroke-width="1"/><path d="M588.5 245V600" stroke="#dcdcdc" stroke-width="1"/><path d="M657.5 245V600" stroke="#dcdcdc" stroke-width="1"/><path d="M727.5 245V600" stroke="#dcdcdc" stroke-width="1"/><path d="M797.5 245V600" stroke="#dcdcdc" stroke-width="1"/><path d="M867.5 245V600" stroke="#dcdcdc" stroke-width="1"/><path d="M937.5 245V600" stroke="#dcdcdc" stroke-width="1"/><path d="M99.5 224V244" stroke="url(#hg)" stroke-width="1"/><path d="M169.5 224V244" stroke="url(#hg)" stroke-width="1"/><path d="M239.5 224V244" stroke="url(#hg)" stroke-width="1"/><path d="M309.5 224V244" stroke="url(#hg)" stroke-width="1"/><path d="M378.5 224V244" stroke="url(#hg)" stroke-width="1"/><path d="M448.5 224V244" stroke="url(#hg)" stroke-width="1"/><path d="M518.5 224V244" stroke="url(#hg)" stroke-width="1"/><path d="M588.5 224V244" stroke="url(#hg)" stroke-width="1"/><path d="M657.5 224V244" stroke="url(#hg)" stroke-width="1"/><path d="M727.5 224V244" stroke="url(#hg)" stroke-width="1"/><path d="M797.5 224V244" stroke="url(#hg)" stroke-width="1"/><path d="M867.5 224V244" stroke="url(#hg)" stroke-width="1"/><path d="M937.5 224V244" stroke="url(#hg)" stroke-width="1"/><path d="M1 244.5H1001" stroke="#ababab" stroke-width="1"/><path d="M30.5 224V600" stroke="#b4b4b4" stroke-width="1"/><path d="M1 265.5H30" stroke="url(#rg)" stroke-width="1"/><path d="M1 286.5H30" stroke="url(#rg)" stroke-width="1"/><path d="M1 307.5H30" stroke="url(#rg)" stroke-width="1"/><path d="M1 328.5H30" stroke="url(#rg)" stroke-width="1"/><path d="M1 349.5H30" stroke="url(#rg)" stroke-width="1"/><path d="M1 370.5H30" stroke="url(#rg)" stroke-width="1"/><path d="M1 391.5H30" stroke="url(#rg)" stroke-width="1"/><path d="M1 412.5H30" stroke="url(#rg)" stroke-width="1"/><path d="M1 433.5H30" stroke="url(#rg)" stroke-width="1"/><path d="M1 454.5H30" stroke="url(#rg)" stroke-width="1"/><path d="M1 474.5H30" stroke="url(#rg)" stroke-width="1"/><path d="M1 495.5H30" stroke="url(#rg)" stroke-width="1"/><path d="M1 516.5H30" stroke="url(#rg)" stroke-width="1"/><path d="M1 537.5H30" stroke="url(#rg)" stroke-width="1"/><path d="M1 558.5H30" stroke="url(#rg)" stroke-width="1"/><path d="M1 579.5H30" stroke="url(#rg)" stroke-width="1"/><path d="M1 600.5H30" stroke="url(#rg)" stroke-width="1"/><path d="M13.5 241.5h13.5v-13.5z" fill="#c0c0c0"/><path d="M1000.5 245V600" stroke="#ababab" stroke-width="1"/><path d="M1 600.5H1001" stroke="#ababab" stroke-width="1"/></svg>
<div class="t" style="left:-134.8px;width:400px;text-align:center;top:228.35px;font-size:14px;line-height:14px;color:#222;font-weight:normal;">A</div>
<div class="t" style="left:-65.0px;width:400px;text-align:center;top:228.35px;font-size:14px;line-height:14px;color:#222;font-weight:normal;">B</div>
<div class="t" style="left:4.7px;width:400px;text-align:center;top:228.35px;font-size:14px;line-height:14px;color:#222;font-weight:normal;">C</div>
<div class="t" style="left:74.5px;width:400px;text-align:center;top:228.35px;font-size:14px;line-height:14px;color:#222;font-weight:normal;">D</div>
<div class="t" style="left:144.3px;width:400px;text-align:center;top:228.35px;font-size:14px;line-height:14px;color:#222;font-weight:normal;">E</div>
<div class="t" style="left:214.0px;width:400px;text-align:center;top:228.35px;font-size:14px;line-height:14px;color:#222;font-weight:normal;">F</div>
<div class="t" style="left:283.8px;width:400px;text-align:center;top:228.35px;font-size:14px;line-height:14px;color:#222;font-weight:normal;">G</div>
<div class="t" style="left:353.6px;width:400px;text-align:center;top:228.35px;font-size:14px;line-height:14px;color:#222;font-weight:normal;">H</div>
<div class="t" style="left:423.3px;width:400px;text-align:center;top:228.35px;font-size:14px;line-height:14px;color:#222;font-weight:normal;">I</div>
<div class="t" style="left:493.1px;width:400px;text-align:center;top:228.35px;font-size:14px;line-height:14px;color:#222;font-weight:normal;">J</div>
<div class="t" style="left:562.9px;width:400px;text-align:center;top:228.35px;font-size:14px;line-height:14px;color:#222;font-weight:normal;">K</div>
<div class="t" style="left:632.7px;width:400px;text-align:center;top:228.35px;font-size:14px;line-height:14px;color:#222;font-weight:normal;">L</div>
<div class="t" style="left:702.4px;width:400px;text-align:center;top:228.35px;font-size:14px;line-height:14px;color:#222;font-weight:normal;">M</div>
<div class="t" style="left:772.2px;width:400px;text-align:center;top:228.35px;font-size:14px;line-height:14px;color:#222;font-weight:normal;">N</div>
<div class="t" style="left:-184.2px;width:400px;text-align:center;top:249.10px;font-size:14.3px;line-height:14.3px;color:#222;font-weight:normal;">1</div>
<div class="t" style="left:-184.2px;width:400px;text-align:center;top:270.02px;font-size:14.3px;line-height:14.3px;color:#222;font-weight:normal;">2</div>
<div class="t" style="left:-184.2px;width:400px;text-align:center;top:290.94px;font-size:14.3px;line-height:14.3px;color:#222;font-weight:normal;">3</div>
<div class="t" style="left:-184.2px;width:400px;text-align:center;top:311.86px;font-size:14.3px;line-height:14.3px;color:#222;font-weight:normal;">4</div>
<div class="t" style="left:-184.2px;width:400px;text-align:center;top:332.78px;font-size:14.3px;line-height:14.3px;color:#222;font-weight:normal;">5</div>
<div class="t" style="left:-184.2px;width:400px;text-align:center;top:353.70px;font-size:14.3px;line-height:14.3px;color:#222;font-weight:normal;">6</div>
<div class="t" style="left:-184.2px;width:400px;text-align:center;top:374.62px;font-size:14.3px;line-height:14.3px;color:#222;font-weight:normal;">7</div>
<div class="t" style="left:-184.2px;width:400px;text-align:center;top:395.54px;font-size:14.3px;line-height:14.3px;color:#222;font-weight:normal;">8</div>
<div class="t" style="left:-184.2px;width:400px;text-align:center;top:416.46px;font-size:14.3px;line-height:14.3px;color:#222;font-weight:normal;">9</div>
<div class="t" style="left:-184.2px;width:400px;text-align:center;top:437.38px;font-size:14.3px;line-height:14.3px;color:#222;font-weight:normal;">10</div>
<div class="t" style="left:-184.2px;width:400px;text-align:center;top:458.30px;font-size:14.3px;line-height:14.3px;color:#222;font-weight:normal;">11</div>
<div class="t" style="left:-184.2px;width:400px;text-align:center;top:479.22px;font-size:14.3px;line-height:14.3px;color:#222;font-weight:normal;">12</div>
<div class="t" style="left:-184.2px;width:400px;text-align:center;top:500.14px;font-size:14.3px;line-height:14.3px;color:#222;font-weight:normal;">13</div>
<div class="t" style="left:-184.2px;width:400px;text-align:center;top:521.06px;font-size:14.3px;line-height:14.3px;color:#222;font-weight:normal;">14</div>
<div class="t" style="left:-184.2px;width:400px;text-align:center;top:541.98px;font-size:14.3px;line-height:14.3px;color:#222;font-weight:normal;">15</div>
<div class="t" style="left:-184.2px;width:400px;text-align:center;top:562.90px;font-size:14.3px;line-height:14.3px;color:#222;font-weight:normal;">16</div>
<div class="t" style="left:-184.2px;width:400px;text-align:center;top:583.82px;font-size:14.3px;line-height:14.3px;color:#222;font-weight:normal;">17</div>
<div class="r" style="left:100px;top:266px;width:70px;height:209px;background:#ebe6f5"></div>
<div class="r" style="left:170px;top:266px;width:69.6px;height:209px;background:#e8eef8"></div>
<div class="t" style="left:102.6px;top:249.54px;font-size:13.3px;line-height:13.3px;color:#000;font-weight:normal;">X Axis</div>
<div class="t" style="left:172.6px;top:249.54px;font-size:13.3px;line-height:13.3px;color:#000;font-weight:normal;">Y Axis</div>
<div class="t" style="left:-133.7px;width:300px;text-align:right;top:270.47px;font-size:14px;line-height:14px;color:#000;font-weight:normal;">0.50</div>
<div class="t" style="left:-63.6px;width:300px;text-align:right;top:270.47px;font-size:14px;line-height:14px;color:#000;font-weight:normal;">2</div>
<div class="t" style="left:-133.7px;width:300px;text-align:right;top:291.39px;font-size:14px;line-height:14px;color:#000;font-weight:normal;">1.00</div>
<div class="t" style="left:-63.6px;width:300px;text-align:right;top:291.39px;font-size:14px;line-height:14px;color:#000;font-weight:normal;">4</div>
<div class="t" style="left:-133.7px;width:300px;text-align:right;top:312.31px;font-size:14px;line-height:14px;color:#000;font-weight:normal;">1.50</div>
<div class="t" style="left:-63.6px;width:300px;text-align:right;top:312.31px;font-size:14px;line-height:14px;color:#000;font-weight:normal;">6</div>
<div class="t" style="left:-133.7px;width:300px;text-align:right;top:333.23px;font-size:14px;line-height:14px;color:#000;font-weight:normal;">2.00</div>
<div class="t" style="left:-63.6px;width:300px;text-align:right;top:333.23px;font-size:14px;line-height:14px;color:#000;font-weight:normal;">7</div>
<div class="t" style="left:-133.7px;width:300px;text-align:right;top:354.15px;font-size:14px;line-height:14px;color:#000;font-weight:normal;">2.50</div>
<div class="t" style="left:-63.6px;width:300px;text-align:right;top:354.15px;font-size:14px;line-height:14px;color:#000;font-weight:normal;">9</div>
<div class="t" style="left:-133.7px;width:300px;text-align:right;top:375.07px;font-size:14px;line-height:14px;color:#000;font-weight:normal;">3.00</div>
<div class="t" style="left:-63.6px;width:300px;text-align:right;top:375.07px;font-size:14px;line-height:14px;color:#000;font-weight:normal;">11</div>
<div class="t" style="left:-133.7px;width:300px;text-align:right;top:395.99px;font-size:14px;line-height:14px;color:#000;font-weight:normal;">3.50</div>
<div class="t" style="left:-63.6px;width:300px;text-align:right;top:395.99px;font-size:14px;line-height:14px;color:#000;font-weight:normal;">12</div>
<div class="t" style="left:-133.7px;width:300px;text-align:right;top:416.91px;font-size:14px;line-height:14px;color:#000;font-weight:normal;">4.00</div>
<div class="t" style="left:-63.6px;width:300px;text-align:right;top:416.91px;font-size:14px;line-height:14px;color:#000;font-weight:normal;">15</div>
<div class="t" style="left:-133.7px;width:300px;text-align:right;top:437.83px;font-size:14px;line-height:14px;color:#000;font-weight:normal;">4.50</div>
<div class="t" style="left:-63.6px;width:300px;text-align:right;top:437.83px;font-size:14px;line-height:14px;color:#000;font-weight:normal;">17</div>
<div class="t" style="left:-133.7px;width:300px;text-align:right;top:458.75px;font-size:14px;line-height:14px;color:#000;font-weight:normal;">5.00</div>
<div class="t" style="left:-63.6px;width:300px;text-align:right;top:458.75px;font-size:14px;line-height:14px;color:#000;font-weight:normal;">20</div>
<svg class="r" style="left:0px;top:0px;" width="1024" height="650" viewBox="0 0 1024 650"><path d="M100 286.5H239" stroke="#d4d4dc" stroke-width="1"/><path d="M100 307.5H239" stroke="#d4d4dc" stroke-width="1"/><path d="M100 328.5H239" stroke="#d4d4dc" stroke-width="1"/><path d="M100 349.5H239" stroke="#d4d4dc" stroke-width="1"/><path d="M100 370.5H239" stroke="#d4d4dc" stroke-width="1"/><path d="M100 391.5H239" stroke="#d4d4dc" stroke-width="1"/><path d="M100 412.5H239" stroke="#d4d4dc" stroke-width="1"/><path d="M100 433.5H239" stroke="#d4d4dc" stroke-width="1"/><path d="M100 454.5H239" stroke="#d4d4dc" stroke-width="1"/><path d="M170 265H99.6V475H170" fill="none" stroke="#7650c0" stroke-width="1.7"/><path d="M170 265V475" fill="none" stroke="#7650c0" stroke-width="1.7"/><path d="M170 265H240V475H170" fill="none" stroke="#2c69d2" stroke-width="1.7"/><rect x="96.5" y="262.3" width="6.6" height="6.6" fill="#fff"/><rect x="97.7" y="263.5" width="4.2" height="4.2" fill="#7650c0"/><rect x="166.7" y="262.3" width="6.6" height="6.6" fill="#fff"/><rect x="167.9" y="263.5" width="4.2" height="4.2" fill="#7650c0"/><rect x="96.5" y="471.9" width="6.6" height="6.6" fill="#fff"/><rect x="97.7" y="473.09999999999997" width="4.2" height="4.2" fill="#7650c0"/><rect x="166.7" y="471.9" width="6.6" height="6.6" fill="#fff"/><rect x="167.9" y="473.09999999999997" width="4.2" height="4.2" fill="#7650c0"/><rect x="236.2" y="262.2" width="6.6" height="6.6" fill="#fff"/><rect x="237.4" y="263.4" width="4.2" height="4.2" fill="#2c69d2"/><rect x="236.2" y="471.9" width="6.6" height="6.6" fill="#fff"/><rect x="237.4" y="473.09999999999997" width="4.2" height="4.2" fill="#2c69d2"/></svg>
<svg class="r" style="left:0px;top:0px;" width="1024" height="650" viewBox="0 0 1024 650"><rect x="254.2" y="265.5" width="523.3" height="314.1" fill="#fff" stroke="#6e6e6e" stroke-width="1.6"/><path d="M287.5 319.0V544.5" stroke="#d9d9d9" stroke-width="1"/><path d="M364.4 319.0V544.5" stroke="#d9d9d9" stroke-width="1"/><path d="M441.3 319.0V544.5" stroke="#d9d9d9" stroke-width="1"/><path d="M518.1 319.0V544.5" stroke="#d9d9d9" stroke-width="1"/><path d="M595.0 319.0V544.5" stroke="#d9d9d9" stroke-width="1"/><path d="M671.9 319.0V544.5" stroke="#d9d9d9" stroke-width="1"/><path d="M748.8 319.0V544.5" stroke="#d9d9d9" stroke-width="1"/><path d="M287.5 544.5H748.8" stroke="#d9d9d9" stroke-width="1"/><path d="M287.5 499.4H748.8" stroke="#d9d9d9" stroke-width="1"/><path d="M287.5 454.3H748.8" stroke="#d9d9d9" stroke-width="1"/><path d="M287.5 409.2H748.8" stroke="#d9d9d9" stroke-width="1"/><path d="M287.5 364.1H748.8" stroke="#d9d9d9" stroke-width="1"/><path d="M287.5 319.0H748.8" stroke="#d9d9d9" stroke-width="1"/><circle cx="325.9" cy="526.5" r="3.5" fill="#4472c4"/><circle cx="364.4" cy="508.4" r="3.5" fill="#4472c4"/><circle cx="402.8" cy="490.4" r="3.5" fill="#4472c4"/><circle cx="441.3" cy="481.4" r="3.5" fill="#4472c4"/><circle cx="479.7" cy="463.3" r="3.5" fill="#4472c4"/><circle cx="518.1" cy="445.3" r="3.5" fill="#4472c4"/><circle cx="556.6" cy="436.3" r="3.5" fill="#4472c4"/><circle cx="595.0" cy="409.2" r="3.5" fill="#4472c4"/><circle cx="633.5" cy="391.2" r="3.5" fill="#4472c4"/><circle cx="671.9" cy="364.1" r="3.5" fill="#4472c4"/><circle cx="254.2" cy="265.5" r="5.1" fill="#fff" stroke="#595959" stroke-width="2.1"/><circle cx="516.4" cy="265.5" r="5.1" fill="#fff" stroke="#595959" stroke-width="2.1"/><circle cx="777.5" cy="265.5" r="5.1" fill="#fff" stroke="#595959" stroke-width="2.1"/><circle cx="254.5" cy="422.9" r="5.1" fill="#fff" stroke="#595959" stroke-width="2.1"/><circle cx="777.7" cy="422.9" r="5.1" fill="#fff" stroke="#595959" stroke-width="2.1"/><circle cx="254.2" cy="579.6" r="5.1" fill="#fff" stroke="#595959" stroke-width="2.1"/><circle cx="516.4" cy="579.6" r="5.1" fill="#fff" stroke="#595959" stroke-width="2.1"/><circle cx="777.5" cy="579.6" r="5.1" fill="#fff" stroke="#595959" stroke-width="2.1"/></svg>
<div class="t" style="left:314.6px;width:400px;text-align:center;top:279.34px;font-size:18.5px;line-height:18.5px;color:#595959;font-weight:normal;">Chart Title</div>
<div class="t" style="left:-24.0px;width:300px;text-align:right;top:538.93px;font-size:11.3px;line-height:11.3px;color:#595959;font-weight:normal;">0</div>
<div class="t" style="left:-24.0px;width:300px;text-align:right;top:493.83px;font-size:11.3px;line-height:11.3px;color:#595959;font-weight:normal;">5</div>
<div class="t" style="left:-24.0px;width:300px;text-align:right;top:448.73px;font-size:11.3px;line-height:11.3px;color:#595959;font-weight:normal;">10</div>
<div class="t" style="left:-24.0px;width:300px;text-align:right;top:403.63px;font-size:11.3px;line-height:11.3px;color:#595959;font-weight:normal;">15</div>
<div class="t" style="left:-24.0px;width:300px;text-align:right;top:358.53px;font-size:11.3px;line-height:11.3px;color:#595959;font-weight:normal;">20</div>
<div class="t" style="left:-24.0px;width:300px;text-align:right;top:313.43px;font-size:11.3px;line-height:11.3px;color:#595959;font-weight:normal;">25</div>
<div class="t" style="left:87.5px;width:400px;text-align:center;top:555.63px;font-size:11.3px;line-height:11.3px;color:#595959;font-weight:normal;">0.00</div>
<div class="t" style="left:164.4px;width:400px;text-align:center;top:555.63px;font-size:11.3px;line-height:11.3px;color:#595959;font-weight:normal;">1.00</div>
<div class="t" style="left:241.3px;width:400px;text-align:center;top:555.63px;font-size:11.3px;line-height:11.3px;color:#595959;font-weight:normal;">2.00</div>
<div class="t" style="left:318.1px;width:400px;text-align:center;top:555.63px;font-size:11.3px;line-height:11.3px;color:#595959;font-weight:normal;">3.00</div>
<div class="t" style="left:395.0px;width:400px;text-align:center;top:555.63px;font-size:11.3px;line-height:11.3px;color:#595959;font-weight:normal;">4.00</div>
<div class="t" style="left:471.9px;width:400px;text-align:center;top:555.63px;font-size:11.3px;line-height:11.3px;color:#595959;font-weight:normal;">5.00</div>
<div class="t" style="left:548.8px;width:400px;text-align:center;top:555.63px;font-size:11.3px;line-height:11.3px;color:#595959;font-weight:normal;">6.00</div>
<svg class="r" style="left:0px;top:0px;" width="1024" height="650" viewBox="0 0 1024 650"><rect x="789.6" y="264.8" width="30" height="30" rx="1" fill="#fff" stroke="#707070" stroke-width="1.2"/><rect x="789.6" y="305.6" width="30" height="30" rx="1" fill="#fff" stroke="#707070" stroke-width="1.2"/><rect x="789.6" y="346.4" width="30" height="30" rx="1" fill="#fff" stroke="#707070" stroke-width="1.2"/><path d="M803.6 270.6v17.2 M794.8 279.2h17.6" stroke="#3aa050" stroke-width="1.5"/><path d="M803.2 320.6L810.9 313.3Q812.8 312 812.3 314.2L805.2 322.4Z" fill="#fff" stroke="#444" stroke-width="1.1" stroke-linejoin="round"/><path d="M803.4 320.6C800.5 320.4 799 322.4 798.5 324C797.9 325.4 796.2 325.9 794.4 325.6C796.6 327.4 800.5 327.8 803 326.3C804.8 325.1 805.6 323.2 805.2 322.4Z" fill="#6aaee6" stroke="#2f75c5" stroke-width="1"/><path d="M795.4 352.4H812.1V355.5L805.9 361.5V370.2H801.6V361.5L795.4 355.5Z" fill="#f7f7f7" stroke="#555" stroke-width="1.15" stroke-linejoin="round"/></svg>
<div class="r" style="left:1004px;top:226px;width:16px;height:16px;background:#fff;border:1px solid #c6c6c6"></div>
<div class="r" style="left:1004px;top:242px;width:16px;height:289.6px;background:#fff;border:1px solid #c6c6c6"></div>
<div class="r" style="left:1004px;top:531.6px;width:16px;height:53px;background:#ebebeb"></div>
<div class="r" style="left:1004px;top:584.5px;width:16px;height:16px;background:#fff;border:1px solid #c6c6c6"></div>
<svg class="r" style="left:0px;top:0px;" width="1024" height="650" viewBox="0 0 1024 650"><path d="M1008 236.5h8l-4-4z" fill="#222"/><path d="M1008 590h8l-4 4z" fill="#222"/></svg>
<div class="r" style="left:1px;top:601px;width:1022px;height:24px;background:#e6e6e6"></div>
<div class="r" style="left:1px;top:624.5px;width:1022px;height:1px;background:#d0d0d0"></div>
<div class="r" style="left:637px;top:601px;width:60.5px;height:21px;background:#fff;border-left:1px solid #c6c6c6;border-right:1px solid #c6c6c6"></div>
<div class="r" style="left:637px;top:620.5px;width:60.5px;height:2px;background:#1e7145"></div>
<svg class="r" style="left:0px;top:0px;" width="1024" height="650" viewBox="0 0 1024 650"><path d="M30.2 608.7v8.2l-5-4.1z" fill="#1e7145"/><path d="M50.6 609.3v7.5l4-3.75z" fill="#b4b4b4"/><rect x="72.10000000000001" y="613" width="2.2" height="2.2" fill="#1e7145"/><rect x="76.7" y="613" width="2.2" height="2.2" fill="#1e7145"/><rect x="81.30000000000001" y="613" width="2.2" height="2.2" fill="#1e7145"/><path d="M91.6 604.6V621.2" stroke="#a0a0a0" stroke-width="1"/><path d="M235.8 604.6V621.2" stroke="#a0a0a0" stroke-width="1"/><path d="M287.9 604.6V621.2" stroke="#a0a0a0" stroke-width="1"/><path d="M397.7 604.6V621.2" stroke="#a0a0a0" stroke-width="1"/><path d="M483.3 604.6V621.2" stroke="#a0a0a0" stroke-width="1"/><path d="M575.6 604.6V621.2" stroke="#a0a0a0" stroke-width="1"/><circle cx="735.4" cy="613.4" r="8.3" fill="none" stroke="#777" stroke-width="1.2"/><path d="M735.4 608.5v9.8 M730.5 613.4h9.8" stroke="#777" stroke-width="1.3"/><rect x="855" y="607" width="2" height="2" fill="#a0a0a0"/><rect x="855" y="611.8" width="2" height="2" fill="#a0a0a0"/><rect x="855" y="616.6" width="2" height="2" fill="#a0a0a0"/></svg>
<div class="t" style="left:103.5px;top:602.74px;font-size:14.6px;line-height:14.6px;color:#444;font-weight:normal;">ZeroBasedBudget</div>
<div class="t" style="left:246.1px;top:603.33px;font-size:13.9px;line-height:13.9px;color:#444;font-weight:normal;">MTE</div>
<div class="t" style="left:299.8px;top:602.66px;font-size:14.7px;line-height:14.7px;color:#444;font-weight:normal;">ScenarioMgr</div>
<div class="t" style="left:408.4px;top:603.08px;font-size:14.2px;line-height:14.2px;color:#444;font-weight:normal;">GoalSeek</div>
<div class="t" style="left:493.9px;top:602.49px;font-size:14.9px;line-height:14.9px;color:#444;font-weight:normal;">DataTable</div>
<div class="t" style="left:585.7px;top:602.91px;font-size:14.4px;line-height:14.4px;color:#444;font-weight:normal;">Times</div>
<div class="t" style="left:646.3px;top:603.20px;font-size:14.3px;line-height:14.3px;color:#1e7145;font-weight:bold;">Curve</div>
<div class="r" style="left:870.3px;top:605px;width:16px;height:15.7px;background:#fff;border:1px solid #aaa"></div>
<div class="r" style="left:886.3px;top:605px;width:90.2px;height:15.7px;background:#fff;border:1px solid #aaa"></div>
<div class="r" style="left:976.5px;top:605.5px;width:8.5px;height:14.7px;background:#efefef"></div>
<div class="r" style="left:985px;top:605px;width:16px;height:15.7px;background:#fff;border:1px solid #aaa"></div>
<svg class="r" style="left:0px;top:0px;" width="1024" height="650" viewBox="0 0 1024 650"><path d="M880.5 608.5v8l-4-4z" fill="#222"/><path d="M990.5 608.5v8l4-4z" fill="#222"/></svg>
<div class="r" style="left:1px;top:625.5px;width:1022px;height:22.5px;background:#f3f2f1"></div>
<div class="t" style="left:9.3px;top:633.10px;font-size:11.1px;line-height:11.1px;color:#555;font-weight:normal;">Ready</div>
<div class="t" style="left:477.0px;top:633.19px;font-size:11px;line-height:11px;color:#555;font-weight:normal;">Average: 6.53</div>
<div class="t" style="left:585.2px;top:633.10px;font-size:11.1px;line-height:11.1px;color:#444;font-weight:normal;">Display Settings</div>
<div class="t" style="left:974.6px;top:633.27px;font-size:10.9px;line-height:10.9px;color:#555;font-weight:normal;">100%</div>
<div class="r" style="left:686.5px;top:625.5px;width:43.3px;height:22.5px;background:#dadada"></div>
<svg class="r" style="left:0px;top:0px;" width="1024" height="650" viewBox="0 0 1024 650"><rect x="62.8" y="632" width="14" height="11.5" fill="none" stroke="#555" stroke-width="1.1"/><path d="M62.8 634.5h14 M65 637h3 M65 639.5h3" stroke="#555" stroke-width="1"/><circle cx="73.5" cy="640.5" r="3.6" fill="#f3f2f1" stroke="#555" stroke-width="1.1"/><circle cx="73.5" cy="640.5" r="1.5" fill="#555"/><path d="M571.5 640.3H567.8V631.6H581.9V635.5" fill="none" stroke="#555" stroke-width="1.3"/><path d="M582.06 639.80 L580.38 640.78 L580.18 641.51 L581.15 643.20 L580.30 644.05 L578.61 643.08 L577.88 643.28 L576.90 644.96 L575.74 644.65 L575.73 642.70 L575.20 642.17 L573.25 642.16 L572.94 641.00 L574.62 640.02 L574.82 639.29 L573.85 637.60 L574.70 636.75 L576.39 637.72 L577.12 637.52 L578.10 635.84 L579.26 636.15 L579.27 638.10 L579.80 638.63 L581.75 638.64Z" fill="#f3f2f1" stroke="#444" stroke-width="1.2" stroke-linejoin="round"/><circle cx="577.5" cy="640.4" r="1.1" fill="#444"/><rect x="700.9" y="630.8" width="13.6" height="12.8" fill="#f0f0f0" stroke="#444" stroke-width="1.4"/><path d="M700.9 635.1h13.6 M700.9 639.3h13.6 M705.4 630.8v12.8 M710 630.8v12.8" stroke="#444" stroke-width="1.4"/><rect x="744.7" y="630.8" width="14.6" height="12.8" fill="none" stroke="#444" stroke-width="1.3"/><rect x="747.6" y="633.2" width="8.8" height="8" fill="#f7f7f7" stroke="#444" stroke-width="1"/><path d="M749.3 635.6h5.4 M749.3 637.3h5.4 M749.3 639h5.4" stroke="#666" stroke-width="0.8"/><rect x="788.2" y="630.8" width="14.3" height="12.8" fill="none" stroke="#444" stroke-width="1.3"/><path d="M791.6 630.8V637.8H796.8V630.8 M788.2 637.8H791.6" fill="none" stroke="#444" stroke-width="1.3"/><path d="M823 637.5h8.5" stroke="#555" stroke-width="1.1"/><path d="M837.5 637.5H945.5" stroke="#777" stroke-width="1.1"/><rect x="890.2" y="631.6" width="4.5" height="11.6" fill="#444"/><path d="M952 637.5h8.5 M956.25 633.2v8.5" stroke="#555" stroke-width="1.1"/></svg>
</body></html>
